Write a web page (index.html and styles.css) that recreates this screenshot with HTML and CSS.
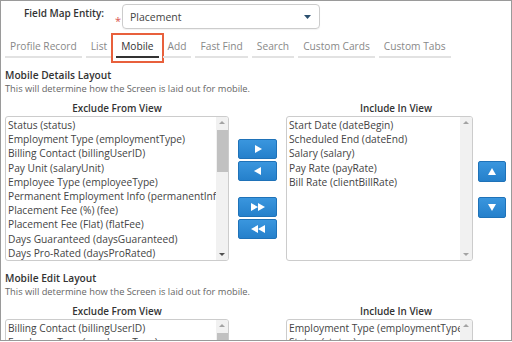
FILE: index.html
```html
<!DOCTYPE html>
<html lang="en">
<head>
    <meta charset="UTF-8">
    <meta name="viewport" content="width=device-width, initial-scale=1.0">
    <title>Field Map - Mobile</title>
    <link rel="stylesheet" href="styles.css">
</head>
<body>
    <div class="frame">
        <div class="entity-row">
            <label class="entity-label">Field Map Entity:</label>
            <span class="required">*</span>
            <div class="select">
                <span>Placement</span>
                <svg class="caret" width="7" height="4" viewBox="0 0 7 4"><path d="M0 0H7L3.5 4Z" fill="#2b4f6e"/></svg>
            </div>
        </div>

        <div class="tabs">
            <span class="tab">Profile Record</span>
            <span class="tab">List</span>
            <span class="tab active">Mobile</span>
            <span class="tab">Add</span>
            <span class="tab">Fast Find</span>
            <span class="tab">Search</span>
            <span class="tab">Custom Cards</span>
            <span class="tab">Custom Tabs</span>
        </div>

        <div class="section">
            <div class="section-title">Mobile Details Layout</div>
            <div class="section-desc">This will determine how the Screen is laid out for mobile.</div>
            <div class="layout">
                <div class="list-head">Exclude From View</div>
                <div></div>
                <div class="list-head wide">Include In View</div>

                <div class="list">
                    <div class="items">
                        <div>Status (status)</div>
                        <div>Employment Type (employmentType)</div>
                        <div>Billing Contact (billingUserID)</div>
                        <div>Pay Unit (salaryUnit)</div>
                        <div>Employee Type (employeeType)</div>
                        <div>Permanent Employment Info (permanentInfo)</div>
                        <div>Placement Fee (%) (fee)</div>
                        <div>Placement Fee (Flat) (flatFee)</div>
                        <div>Days Guaranteed (daysGuaranteed)</div>
                        <div>Days Pro-Rated (daysProRated)</div>
                    </div>
                    <div class="scrollbar">
                        <span class="sb-up"></span>
                        <span class="sb-thumb"></span>
                        <span class="sb-down dark"></span>
                    </div>
                </div>
                <div class="move-buttons">
                    <button class="btn"><svg width="8" height="8" viewBox="0 0 8 8"><path d="M1 0L8 4L1 8Z"/></svg></button>
                    <button class="btn"><svg width="8" height="8" viewBox="0 0 8 8"><path d="M7 0L0 4L7 8Z"/></svg></button>
                    <button class="btn spaced"><svg width="16" height="8" viewBox="0 0 16 8"><path d="M1 0L8 4L1 8Z M8 0L15 4L8 8Z"/></svg></button>
                    <button class="btn"><svg width="16" height="8" viewBox="0 0 16 8"><path d="M8 0L1 4L8 8Z M15 0L8 4L15 8Z"/></svg></button>
                </div>
                <div class="list">
                    <div class="items">
                        <div>Start Date (dateBegin)</div>
                        <div>Scheduled End (dateEnd)</div>
                        <div>Salary (salary)</div>
                        <div>Pay Rate (payRate)</div>
                        <div>Bill Rate (clientBillRate)</div>
                    </div>
                    <div class="scrollbar">
                        <span class="sb-up"></span>
                        <span class="sb-fill"></span>
                        <span class="sb-down"></span>
                    </div>
                </div>
                <div class="order-buttons">
                    <button class="btn small"><svg width="8" height="7" viewBox="0 0 8 7"><path d="M4 0L8 7H0Z"/></svg></button>
                    <button class="btn small"><svg width="8" height="7" viewBox="0 0 8 7"><path d="M0 0H8L4 7Z"/></svg></button>
                </div>
            </div>
        </div>

        <div class="section">
            <div class="section-title">Mobile Edit Layout</div>
            <div class="section-desc">This will determine how the Screen is laid out for mobile.</div>
            <div class="layout">
                <div class="list-head">Exclude From View</div>
                <div></div>
                <div class="list-head wide">Include In View</div>

                <div class="list">
                    <div class="items">
                        <div>Billing Contact (billingUserID)</div>
                        <div>Employee Type (employeeType)</div>
                        <div>Pay Unit (salaryUnit)</div>
                    </div>
                    <div class="scrollbar">
                        <span class="sb-up"></span>
                        <span class="sb-thumb"></span>
                        <span class="sb-down dark"></span>
                    </div>
                </div>
                <div class="move-buttons">
                    <button class="btn"><svg width="8" height="8" viewBox="0 0 8 8"><path d="M1 0L8 4L1 8Z"/></svg></button>
                    <button class="btn"><svg width="8" height="8" viewBox="0 0 8 8"><path d="M7 0L0 4L7 8Z"/></svg></button>
                </div>
                <div class="list">
                    <div class="items">
                        <div>Employment Type (employmentType)</div>
                        <div>Status (status)</div>
                    </div>
                    <div class="scrollbar">
                        <span class="sb-up"></span>
                        <span class="sb-fill"></span>
                        <span class="sb-down"></span>
                    </div>
                </div>
                <div class="order-buttons"></div>
            </div>
        </div>
    </div>
</body>
</html>
```

FILE: styles.css
```css
body {
    margin: 0;
    font-family: "Open Sans", Arial, sans-serif;
    color: #444;
    background: #fff;
}

.frame {
    width: 512px;
    height: 341px;
    box-sizing: border-box;
    border: 1px solid #9a9a9a;
    overflow: hidden;
    padding: 0 4px;
}

.entity-row {
    display: flex;
    align-items: flex-start;
    padding-top: 3px;
}

.entity-label {
    font-size: 10px;
    font-weight: 600;
    color: #333;
    margin-left: 19px;
    margin-top: 2px;
    width: 91px;
}

.required {
    color: #d9534f;
    font-size: 11px;
    margin-top: 9px;
    width: 7px;
}

.select {
    width: 198px;
    height: 25px;
    box-sizing: border-box;
    border: 1px solid #ccc;
    border-radius: 4px;
    display: flex;
    align-items: center;
    justify-content: space-between;
    padding: 0 8px 0 7px;
    font-size: 10.5px;
    color: #444;
    box-shadow: 0 1px 1px rgba(0, 0, 0, 0.05);
}

.tabs {
    display: flex;
    gap: 4px;
    margin-top: 9px;
}

.tab {
    font-size: 10.2px;
    line-height: 16px;
    color: #888;
    padding: 0 5px 2px;
    border-bottom: 2px solid #e2e2e2;
}

.tab.active {
    color: #333;
    border-bottom-color: #333;
    outline: 2px solid #e8603c;
    outline-offset: 3px;
}

.section {
    margin-top: 11px;
}

.section-title {
    font-size: 10.2px;
    font-weight: 600;
    color: #333;
    line-height: 13px;
}

.section-desc {
    font-size: 9.3px;
    color: #666;
    line-height: 13px;
}

.layout {
    display: grid;
    grid-template-columns: 224px 39px 187px 28px;
    column-gap: 9px;
    margin-top: 6px;
}

.layout > .order-buttons {
    margin-left: -4px;
    margin-right: 4px;
}

.list-head {
    font-size: 9.9px;
    font-weight: 600;
    color: #333;
    text-align: center;
    line-height: 14px;
    margin-bottom: 1px;
}

.list-head.wide {
    grid-column: span 2;
    margin-right: 4px;
}

.list {
    height: 145px;
    box-sizing: border-box;
    border: 1px solid #ccc;
    border-radius: 3px;
    display: flex;
    overflow: hidden;
}

.items {
    flex: 1;
    min-width: 0;
    padding: 1px 2px;
    font-size: 10.2px;
    line-height: 14.2px;
    color: #444;
    white-space: nowrap;
    overflow: hidden;
}

.scrollbar {
    width: 12px;
    background: #f1f1f1;
    display: flex;
    flex-direction: column;
    align-items: center;
    padding: 4px 0;
    box-sizing: border-box;
}

.sb-up,
.sb-down {
    width: 0;
    height: 0;
    border-left: 3px solid transparent;
    border-right: 3px solid transparent;
}

.sb-up {
    border-bottom: 3px solid #a3a3a3;
}

.sb-down {
    border-top: 3px solid #a3a3a3;
    margin-top: auto;
}

.sb-down.dark {
    border-top-color: #505050;
}

.sb-thumb {
    width: 11px;
    height: 42px;
    background: #c1c1c1;
    margin-top: 6px;
}

.sb-fill {
    flex: 1;
}

.move-buttons,
.order-buttons {
    display: flex;
    flex-direction: column;
    gap: 2px;
}

.move-buttons {
    padding-top: 23px;
}

.order-buttons {
    padding-top: 45px;
    gap: 15px;
}

.btn {
    height: 20px;
    padding: 0;
    border: 1px solid #1f72b8;
    border-radius: 2px;
    background: linear-gradient(#3a96de, #2580cb);
    display: flex;
    align-items: center;
    justify-content: center;
    fill: #fff;
}

.btn.spaced {
    margin-top: 14px;
}

.btn.small {
    height: 21px;
}
```
